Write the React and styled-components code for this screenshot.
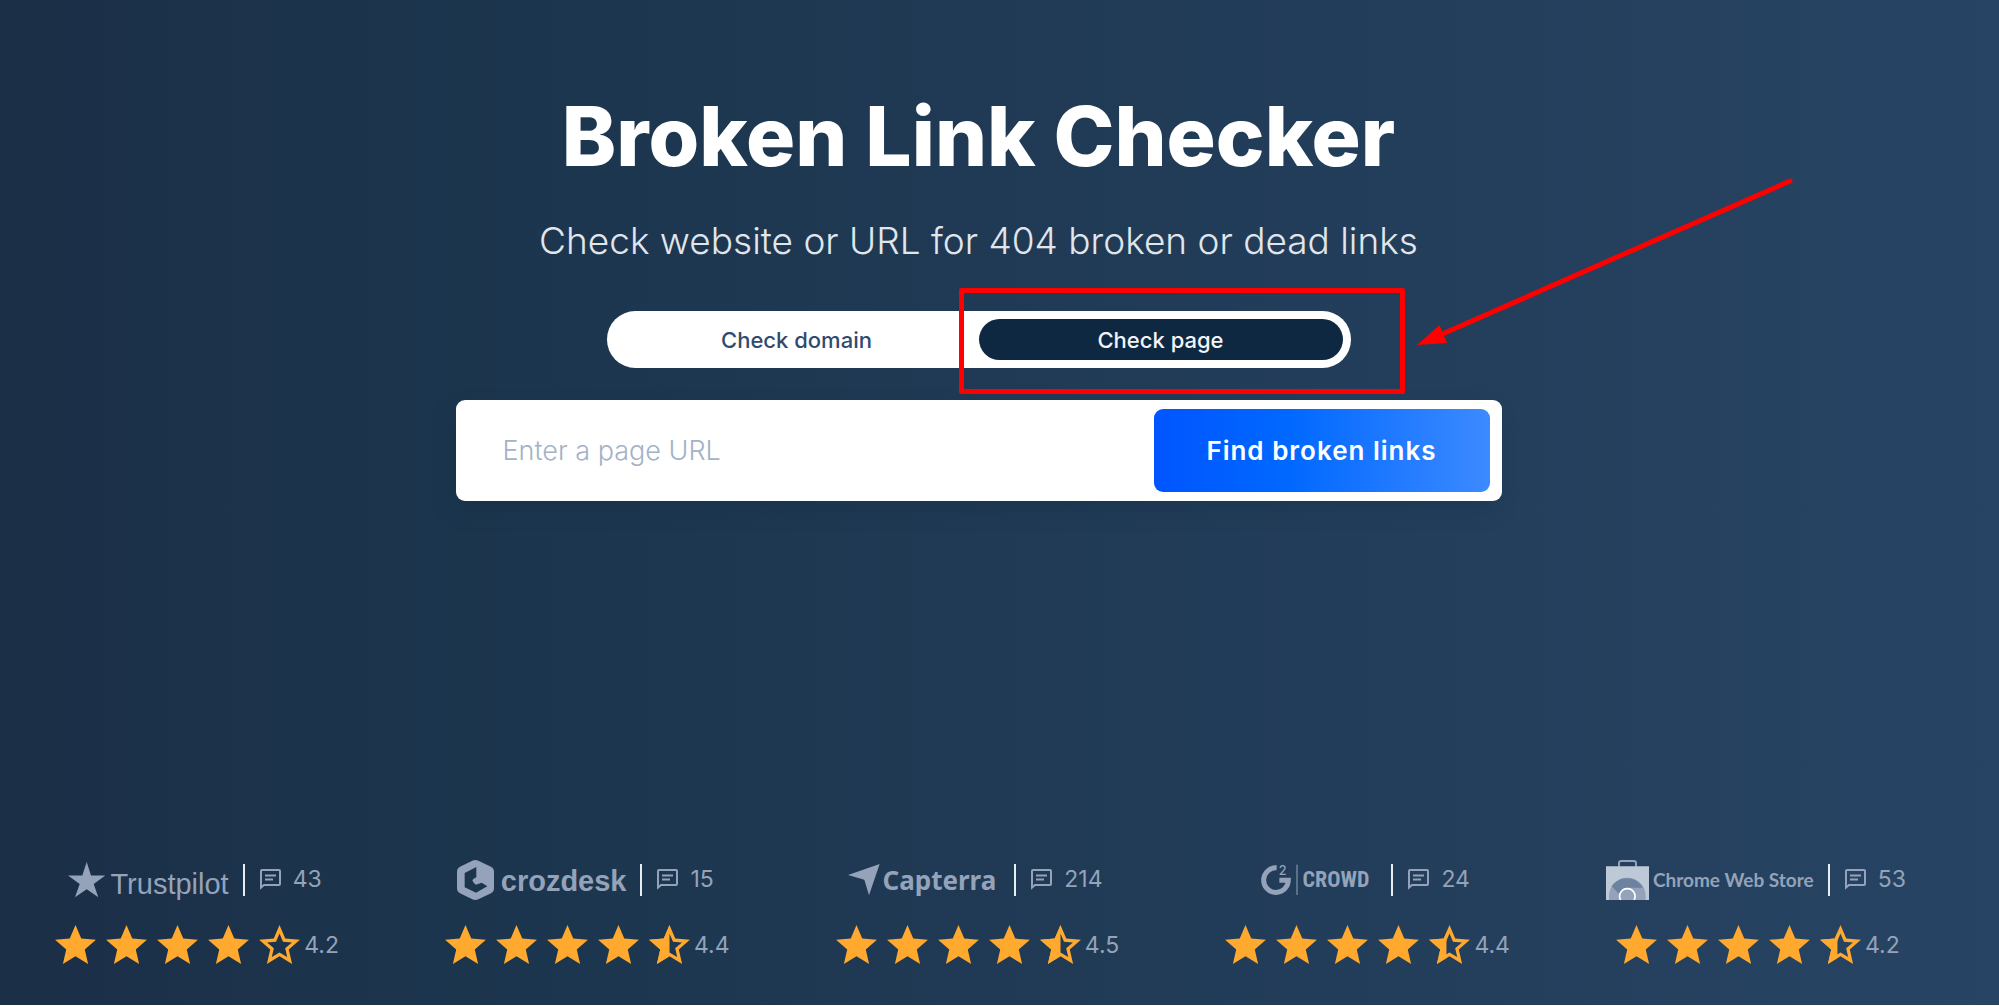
import React, { useState } from 'react';
import styled, { createGlobalStyle } from 'styled-components';

const GlobalStyle = createGlobalStyle`
  * {
    box-sizing: border-box;
  }

  body {
    margin: 0;
    background: #ffffff;
    font-family: Inter, 'Open Sans', sans-serif;
  }
`;

const Page = styled.div`
  min-height: calc(100vh - 1px);
  display: flex;
  flex-direction: column;
  justify-content: space-between;
  background: linear-gradient(to right, #1b2f47 0%, #1b344c 18%, #203a55 50%, #25415f 85%, #274465 100%);
`;

const Hero = styled.main`
  display: flex;
  flex-direction: column;
  align-items: center;
  padding: 91px 42px 60px 0;
`;

const Title = styled.h1`
  margin: 0;
  color: #ffffff;
  font-size: 82px;
  font-weight: 800;
  line-height: 92px;
  text-align: center;
`;

const Subtitle = styled.p`
  margin: 36px 0 48px;
  color: #e1e6ec;
  font-size: 37px;
  font-weight: 300;
  line-height: 44px;
  text-align: center;
`;

const Toggle = styled.div`
  position: relative;
  display: flex;
  width: 744px;
  max-width: 100%;
  padding: 8px;
  margin-bottom: 32px;
  border-radius: 29px;
  background: #ffffff;
`;

const ToggleButton = styled.button`
  flex: 1;
  height: 41px;
  border: none;
  border-radius: 21px;
  background: ${props => props.$active ? '#0f2842' : 'transparent'};
  color: ${props => props.$active ? '#f2f5f8' : '#2f4b70'};
  cursor: pointer;
  font-family: inherit;
  font-size: 22px;
  font-weight: 500;
`;

const Highlight = styled.div`
  position: absolute;
  top: -23px;
  right: -54px;
  width: 446px;
  height: 106px;
  border: 5px solid #fe0000;
  border-radius: 2px;
  pointer-events: none;
`;

const Arrow = styled.svg`
  position: absolute;
  top: -135px;
  left: 808px;
  width: 380px;
  height: 174px;
  pointer-events: none;
`;

const SearchForm = styled.form`
  display: flex;
  align-items: center;
  width: 1046px;
  max-width: 100%;
  height: 101px;
  padding: 0 12px 0 47px;
  border-radius: 9px;
  background: #ffffff;
  box-shadow: -4px 10px 20px rgba(20, 45, 70, 0.3);
`;

const UrlInput = styled.input`
  flex: 1;
  min-width: 0;
  height: 60px;
  padding: 0;
  border: none;
  outline: none;
  background: transparent;
  color: #2f4b70;
  font-family: inherit;
  font-size: 27px;
  font-weight: 300;

  &::placeholder {
    color: #a3b2c6;
    opacity: 1;
  }
`;

const SubmitButton = styled.button`
  width: 336px;
  height: 83px;
  border: none;
  border-radius: 9px;
  background: linear-gradient(to right, #0055ff 0%, #0068ff 40%, #3d8aff 100%);
  color: #ffffff;
  cursor: pointer;
  font-family: inherit;
  font-size: 26px;
  font-weight: 600;
  letter-spacing: 1px;
`;

const Ratings = styled.footer`
  display: grid;
  grid-template-columns: repeat(5, 1fr);
  padding: 0 48px 35px 0;
`;

const Rating = styled.div`
  display: flex;
  flex-direction: column;
  align-items: center;
  gap: 21px;
  color: #94a3b9;
`;

const Source = styled.div`
  display: flex;
  align-items: center;
  height: 40px;
`;

const Logo = styled.div`
  display: flex;
  align-items: center;
  gap: ${props => props.$gap}px;
  padding-right: ${props => props.$space}px;
`;

const Wordmark = styled.span`
  font-family: ${props => props.$font};
  font-size: ${props => props.$size}px;
  font-weight: ${props => props.$weight};
  line-height: 32px;
  padding-top: ${props => props.$drop || 0}px;
`;

const Reviews = styled.div`
  display: flex;
  align-items: center;
  gap: 12px;
  height: 32px;
  padding: 0 0 2px 15px;
  border-left: 2px solid #e8edf2;
  font-size: 23px;
`;

const Score = styled.div`
  display: flex;
  align-items: center;
  height: 49px;
  font-size: 23px;
`;

const Stars = styled.div`
  display: flex;
  gap: 2px;
`;

const ScoreValue = styled.span`
  padding-bottom: 2px;
`;

const STAR = 'M12 17.27L18.18 21l-1.64-7.03L22 9.24l-7.19-.61L12 2 9.19 8.63 2 9.24l5.46 4.73L5.82 21z';
const STAR_OUTLINE = 'M22 9.24l-7.19-.62L12 2 9.19 8.63 2 9.24l5.46 4.73L5.82 21 12 17.27 18.18 21l-1.63-7.03L22 9.24zM12 15.4l-3.76 2.27 1-4.28-3.32-2.88 4.38-.38L12 6.1l1.71 4.04 4.38.38-3.32 2.88 1 4.28L12 15.4z';

// edge is where the solid part of the star stops, on the 24 unit grid
const Star = ({ id, edge }) => (
  <svg width="49" height="49" viewBox="0 0 24 24" fill="#ffa92e" aria-hidden="true">
    {edge < 24 && (
      <>
        <clipPath id={id}>
          <rect x="0" y="0" width={edge} height="24" />
        </clipPath>
        <path d={STAR_OUTLINE} />
      </>
    )}
    <path d={STAR} clipPath={edge < 24 ? `url(#${id})` : undefined} />
  </svg>
);

const ChatIcon = () => (
  <svg width="21" height="21" viewBox="0 0 21 21" fill="none" stroke="currentColor" strokeWidth="2" aria-hidden="true">
    <path d="M1 18.6V2q0-1 1-1h17q1 0 1 1v13q0 1-1 1H4z" strokeLinejoin="miter" />
    <path d="M5 6.5h11M5 10.5h8" strokeWidth="1.8" />
  </svg>
);

const TrustpilotLogo = () => (
  <Logo $gap={4} $space={14}>
    <svg width="38" height="36" viewBox="0 0 38 36" fill="currentColor" aria-hidden="true">
      <path d="M18.7 0L23 13.5h14.3L25.7 22l4.6 13.3-11.6-8-11.7 8L11.7 22 0 13.5h14.3z" />
    </svg>
    <Wordmark $font="'Liberation Sans', sans-serif" $size={29} $weight={400} $drop={8}>Trustpilot</Wordmark>
  </Logo>
);

const CrozdeskLogo = () => (
  <Logo $gap={7} $space={14}>
    <svg width="37" height="40" viewBox="84 60 111 120" fill="currentColor" aria-hidden="true">
      <path
        fillRule="evenodd"
        d="M130 62q9-4 18 0l38 18q9 5 9 15v50q0 10-9 15l-38 18q-9 4-18 0l-37-18q-9-5-9-15V95q0-10 9-15zM142 81l-35 18v43l34 16 34-19-17-11-17 6q-8-4-11-13 2-5 12-9z"
      />
    </svg>
    <Wordmark $font="'Liberation Sans', sans-serif" $size={29} $weight={700} $drop={2}>crozdesk</Wordmark>
  </Logo>
);

const CapterraLogo = () => (
  <Logo $gap={2} $space={18}>
    <svg width="32" height="32" viewBox="88 69 96 96" fill="currentColor" aria-hidden="true">
      <path d="M183 69L88 102l49 14 14 47z" />
    </svg>
    <Wordmark $font="'Noto Sans', sans-serif" $size={26} $weight={700}>Capterra</Wordmark>
  </Logo>
);

const CrowdLogo = () => (
  <Logo $gap={4} $space={22}>
    <svg width="37" height="40" viewBox="156 62 111 120" aria-hidden="true">
      <path d="M203 85.5A37 37 0 1 0 238 123h-27" fill="none" stroke="currentColor" strokeWidth="15" />
      <text x="209" y="108" fill="currentColor" fontFamily="Inter, sans-serif" fontSize="38" fontWeight="500">2</text>
      <path d="M264 76v91" stroke="currentColor" strokeWidth="3" />
    </svg>
    <Wordmark $font="'Liberation Sans Narrow', 'Roboto Condensed', 'Liberation Sans', sans-serif" $size={22} $weight={700}>CROWD</Wordmark>
  </Logo>
);

const ChromeStoreLogo = () => (
  <Logo $gap={4} $space={14}>
    <svg width="43" height="40" viewBox="48 60 129 120" aria-hidden="true">
      <path d="M87 80V70q0-7 7-7h37q7 0 7 7v10" fill="none" stroke="#94a3b9" strokeWidth="6" />
      <path d="M48 79h129v101H48z" fill="#bdc9d6" />
      <path d="M57 180v-12a55 55 0 0 1 110 0v12z" fill="#94a3b9" />
      <path d="M65 139a55 55 0 0 1 94 4h-47a25 25 0 0 0-24 20z" fill="#6c839f" />
      <path d="M92 180a23 23 0 1 1 40 0z" fill="#94a3b9" />
      <path d="M92 180a23 23 0 1 1 40 0" fill="none" stroke="#ffffff" strokeWidth="5" />
    </svg>
    <Wordmark $font="Lato, sans-serif" $size={19} $weight={700}>Chrome Web Store</Wordmark>
  </Logo>
);

const ratings = [
  { name: 'trustpilot', logo: TrustpilotLogo, reviews: 43, score: '4.2', edge: 0 },
  { name: 'crozdesk', logo: CrozdeskLogo, reviews: 15, score: '4.4', edge: 12 },
  { name: 'capterra', logo: CapterraLogo, reviews: 214, score: '4.5', edge: 12 },
  { name: 'g2crowd', logo: CrowdLogo, reviews: 24, score: '4.4', edge: 10.5 },
  { name: 'chrome', logo: ChromeStoreLogo, reviews: 53, score: '4.2', edge: 10.5 },
];

const App = () => {
  const [mode, setMode] = useState('page');
  const [url, setUrl] = useState('');

  const renderRating = ({ name, logo: SourceLogo, reviews, score, edge }) => (
    <Rating key={name}>
      <Source>
        <SourceLogo />
        <Reviews>
          <ChatIcon />
          <span>{reviews}</span>
        </Reviews>
      </Source>
      <Score>
        <Stars>
          {[24, 24, 24, 24, edge].map((value, i) => (
            <Star key={i} id={`${name}-${i}`} edge={value} />
          ))}
        </Stars>
        <ScoreValue>{score}</ScoreValue>
      </Score>
    </Rating>
  );

  return (
    <>
      <GlobalStyle />
      <Page>
        <Hero>
          <Title>Broken Link Checker</Title>
          <Subtitle>Check website or URL for 404 broken or dead links</Subtitle>
          <Toggle>
            <ToggleButton type="button" $active={mode === 'domain'} onClick={() => setMode('domain')}>
              Check domain
            </ToggleButton>
            <ToggleButton type="button" $active={mode === 'page'} onClick={() => setMode('page')}>
              Check page
            </ToggleButton>
            <Highlight />
            <Arrow viewBox="0 0 380 174" aria-hidden="true">
              <path d="M375 5L25 159" stroke="#fe0000" strokeWidth="5" strokeLinecap="round" />
              <path d="M2 169l22.500-20L32 167z" fill="#fe0000" />
            </Arrow>
          </Toggle>
          <SearchForm onSubmit={(e) => e.preventDefault()}>
            <UrlInput
              aria-label="Page URL"
              placeholder={`Enter a ${mode} URL`}
              value={url}
              onChange={(e) => setUrl(e.target.value)}
            />
            <SubmitButton type="submit">Find broken links</SubmitButton>
          </SearchForm>
        </Hero>
        <Ratings>{ratings.map(renderRating)}</Ratings>
      </Page>
    </>
  );
};

export default App;
